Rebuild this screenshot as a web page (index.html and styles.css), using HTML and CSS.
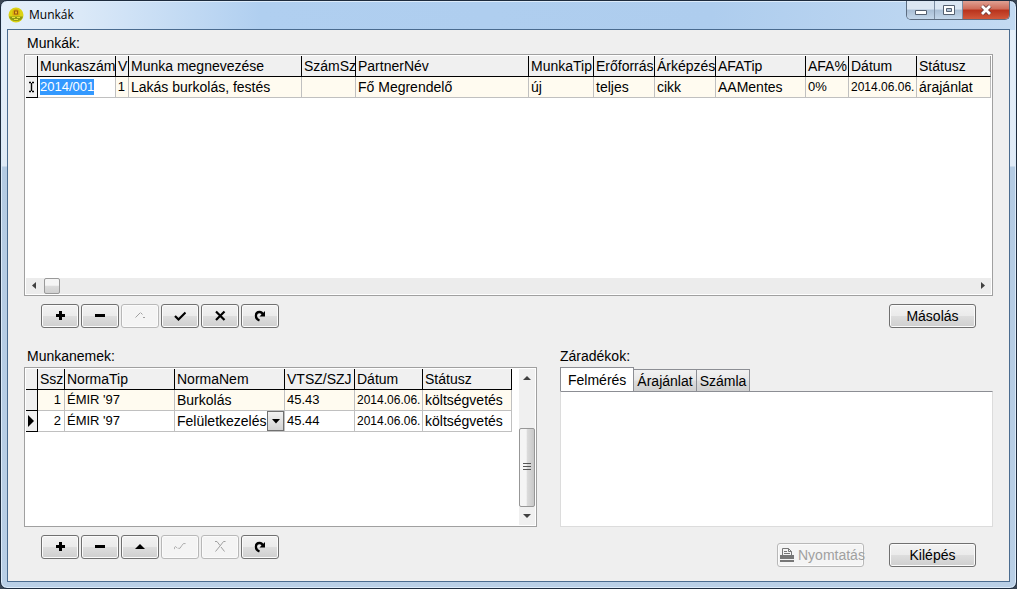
FILE: index.html
```html
<!DOCTYPE html>
<html lang="hu">
<head>
<meta charset="utf-8">
<title>Munkák</title>
<link rel="stylesheet" href="styles.css">
</head>
<body>
<svg class="defs" aria-hidden="true">
  <symbol id="plus" viewBox="0 0 12 12"><path d="M5 1h3v3h3v3h-3v3h-3v-3h-3v-3h3z"/></symbol>
  <symbol id="minus" viewBox="0 0 12 12"><path d="M1 4h10v3h-10z"/></symbol>
  <symbol id="up" viewBox="0 0 12 12"><path d="M6 3l5 5h-10z"/></symbol>
  <symbol id="check" viewBox="0 0 12 12"><path d="M1 6l3.500 3.500 7-7" fill="none" stroke="currentColor" stroke-width="2.200"/></symbol>
  <symbol id="cross" viewBox="0 0 12 12"><path d="M2 1.500l8.500 8.500M10.500 1.500l-8.500 8.500" fill="none" stroke="currentColor" stroke-width="2.200"/></symbol>
  <symbol id="refresh" viewBox="0 0 12 12"><path d="M5.500 10.500C.500 8.500 1 2 5.500 2C7.500 2 8.500 3 9 5" fill="none" stroke="currentColor" stroke-width="2.300"/><path d="M11 1v5.500h-5.500z"/></symbol>
  <symbol id="up-off" viewBox="0 0 12 12"><path d="M1.500 7.500l5-5M7 3l1.500 1.500M9 7.500h2" fill="none" stroke="currentColor"/></symbol>
  <symbol id="check-off" viewBox="0 0 14 12"><path d="M.500 8.500v-2l1.500-1 2 2M5 7.500h2l2-3 2-2.500h2.500" fill="none" stroke="currentColor"/></symbol>
  <symbol id="cross-off" viewBox="0 0 12 12"><path d="M1 .500h2l3 4M11.500 .500h-2l-3.500 4.500-4.500 5.500M7 6l3.500 4.500" fill="none" stroke="currentColor"/></symbol>
</svg>
<div class="window">
  <header class="titlebar">
    <svg class="app-icon" viewBox="0 0 16 16" aria-hidden="true">
      <circle cx="8" cy="8" r="7.500" fill="#dcd313"/>
      <path d="M1 9.500h14a7.200 6 0 0 1-14 0z" fill="#8d9a16"/>
      <path d="M4.500 8.500V4q3.500-4 7 0v4.500z" fill="#d9a80c"/>
      <path d="M6 3.500h4v4h-4z" fill="#9a5a12"/>
      <path d="M7 4.500h2v2h-2z" fill="#f0c020"/>
      <path d="M4 10.500h3M9 10.500h3M6 12.500h4" stroke="#e8e040" fill="none"/>
    </svg>
    <h1 class="title">Munkák</h1>
    <div class="controls">
      <button class="control" aria-label="Kis méret"><svg width="14" height="14" viewBox="0 0 14 14"><path d="M1.500 7.500h11v4h-11z" fill="#fff" stroke="#556070"/></svg></button>
      <button class="control" aria-label="Teljes méret"><svg width="14" height="14" viewBox="0 0 14 14"><path d="M1.500 2.500h11v9h-11z" fill="#fff" stroke="#556070"/><path d="M4.500 5.500h5v3h-5z" fill="#b3c4d8" stroke="#556070"/></svg></button>
      <button class="control close" aria-label="Bezárás"><svg width="14" height="14" viewBox="0 0 14 14"><path d="M3 3l8 8M11 3l-8 8" stroke="#6b3a3a" stroke-width="4.500"/><path d="M3 3l8 8M11 3l-8 8" stroke="#fff" stroke-width="2.800"/></svg></button>
    </div>
  </header>

  <main class="client">
    <h2 class="label">Munkák:</h2>
    <section class="grid jobs">
      <div class="grid-view">
        <table class="data">
          <colgroup><col class="w-mark"><col class="w-number"><col class="w-v"><col class="w-name"><col class="w-invoice"><col class="w-name"><col class="w-type"><col class="w-medium"><col class="w-medium"><col class="w-vat"><col class="w-percent"><col class="w-date"><col></colgroup>
          <thead><tr><th></th><th>Munkaszám</th><th>V</th><th>Munka megnevezése</th><th>SzámSz</th><th>PartnerNév</th><th>MunkaTip</th><th>Erőforrás</th><th>Árképzés</th><th>AFATip</th><th>AFA%</th><th>Dátum</th><th>Státusz</th></tr></thead>
          <tbody><tr class="tint">
            <td class="mark"><svg width="11" height="12" viewBox="0 0 11 12"><path d="M3 1.500h2M6 1.500h2M3 10.500h2M6 10.500h2M5.500 2v8" fill="none" stroke="#000" stroke-width="1.400"/></svg></td>
            <td class="editing"><input class="cell-input" aria-label="Munkaszám" value="2014/001"></td>
            <td class="right code">1</td><td>Lakás burkolás, festés</td><td></td><td>Fő Megrendelő</td><td>új</td><td>teljes</td><td>cikk</td><td>AAMentes</td><td class="code">0%</td><td class="date">2014.06.06.</td><td>árajánlat</td>
          </tr></tbody>
        </table>
      </div>
      <div class="hscroll">
        <svg class="arrow" width="16" height="16" viewBox="0 0 16 16"><path d="M10 4v7l-4-3.500z"/></svg>
        <div class="hthumb"></div>
        <svg class="arrow end" width="16" height="16" viewBox="0 0 16 16"><path d="M6 4v7l4-3.500z"/></svg>
      </div>
    </section>

    <div class="actions">
      <div class="navigator">
        <button class="btn nav" aria-label="Új"><svg class="glyph"><use href="#plus"/></svg></button>
        <button class="btn nav" aria-label="Törlés"><svg class="glyph"><use href="#minus"/></svg></button>
        <button class="btn nav" aria-label="Módosítás" disabled><svg class="glyph"><use href="#up-off"/></svg></button>
        <button class="btn nav" aria-label="Mentés"><svg class="glyph"><use href="#check"/></svg></button>
        <button class="btn nav" aria-label="Elvetés"><svg class="glyph"><use href="#cross"/></svg></button>
        <button class="btn nav" aria-label="Frissítés"><svg class="glyph"><use href="#refresh"/></svg></button>
      </div>
      <button class="btn wide">Másolás</button>
    </div>

    <div class="lower">
      <section class="pane">
        <h2 class="label">Munkanemek:</h2>
        <div class="grid trades">
          <div class="grid-view">
            <table class="data closed">
              <colgroup><col class="w-mark"><col class="w-order"><col class="w-norm"><col class="w-norm"><col class="w-code"><col class="w-date"><col></colgroup>
              <thead><tr><th></th><th>Ssz</th><th>NormaTip</th><th>NormaNem</th><th>VTSZ/SZJ</th><th>Dátum</th><th>Státusz</th></tr></thead>
              <tbody>
                <tr class="tint"><td class="mark"></td><td class="right code">1</td><td class="code">ÉMIR '97</td><td>Burkolás</td><td class="code">45.43</td><td class="date">2014.06.06.</td><td>költségvetés</td></tr>
                <tr><td class="mark"><svg width="10" height="12" viewBox="0 0 10 12"><path d="M2 0v12l6-6z"/></svg></td><td class="right code">2</td><td class="code">ÉMIR '97</td>
                  <td><div class="combo"><select class="combo-select" aria-label="NormaNem"><option>Felületkezelés</option></select><span class="combo-arrow"><svg width="8" height="5" viewBox="0 0 8 5"><path d="M0 0h8l-4 4.500z"/></svg></span></div></td>
                  <td class="code">45.44</td><td class="date">2014.06.06.</td><td>költségvetés</td></tr>
              </tbody>
            </table>
          </div>
          <div class="vscroll">
            <svg class="arrow" width="16" height="20" viewBox="0 0 16 20"><path d="M4 11h8l-4-4z"/></svg>
            <div class="vspace"></div>
            <div class="vthumb"><svg width="8" height="8" viewBox="0 0 8 8"><path d="M0 .500h8M0 3.500h8M0 6.500h8" stroke="#555"/></svg></div>
            <svg class="arrow" width="16" height="18" viewBox="0 0 16 18"><path d="M4 7h8l-4 4z"/></svg>
          </div>
        </div>
      </section>
      <section class="pane">
        <h2 class="label">Záradékok:</h2>
        <div class="tabs" role="tablist">
          <button class="tab active" role="tab" aria-selected="true">Felmérés</button>
          <button class="tab" role="tab" aria-selected="false">Árajánlat</button>
          <button class="tab" role="tab" aria-selected="false">Számla</button>
        </div>
        <div class="sheet" role="tabpanel"></div>
      </section>
    </div>

    <footer class="actions bottom">
      <div class="navigator">
        <button class="btn nav" aria-label="Új"><svg class="glyph"><use href="#plus"/></svg></button>
        <button class="btn nav" aria-label="Törlés"><svg class="glyph"><use href="#minus"/></svg></button>
        <button class="btn nav" aria-label="Módosítás"><svg class="glyph"><use href="#up"/></svg></button>
        <button class="btn nav" aria-label="Mentés" disabled><svg class="glyph"><use href="#check-off"/></svg></button>
        <button class="btn nav" aria-label="Elvetés" disabled><svg class="glyph"><use href="#cross-off"/></svg></button>
        <button class="btn nav" aria-label="Frissítés"><svg class="glyph"><use href="#refresh"/></svg></button>
      </div>
      <div class="dialog-buttons">
        <button class="btn wide print" disabled><svg class="printer" width="16" height="16" viewBox="0 0 16 16"><path d="M3.500 8.500v-7h6l3 3v4M9.500 1.500v3h3M5 4.500h3M5 6.500h6" fill="none" stroke="#777"/><path d="M1 8h14v4h-14zM1 13h14v2h-14z" fill="#777"/></svg>Nyomtatás</button>
        <button class="btn wide">Kilépés</button>
      </div>
    </footer>
  </main>
</div>
</body>
</html>
```
FILE: styles.css
```css
* { box-sizing: border-box; }

body {
  margin: 0;
  background: #3a4654;
  color: #000;
  font: 14px/16px "Liberation Sans", Arial, sans-serif;
}

button, input, select { font: inherit; color: inherit; }
.defs { position: absolute; width: 0; height: 0; }

.window {
  display: flex;
  flex-direction: column;
  height: 100vh;
  min-height: 440px;
  padding: 0 6px 6px;
  border: 1px solid #1d2b3d;
  border-radius: 7px;
  box-shadow: inset 0 0 0 1px #dcebfa;
  background:
    linear-gradient(90deg, #e4effa 0, #dbe9f8 80px, #b0cff0 260px, #aecdee 70%, #c3daf2 100%) top / 100% 29px no-repeat,
    linear-gradient(#e6f0fa 0, #dfeaf6 165px, #b4cbe3 166px, #b9cfe6 100%);
}

.titlebar {
  display: flex;
  align-items: center;
  flex: none;
  height: 28px;
  padding-left: 1px;
}

.app-icon { width: 16px; height: 16px; margin-right: 5px; }
.title { flex: 1; margin: 0; font: 12px/16px "Open Sans", "Noto Sans", sans-serif; }

.controls {
  display: flex;
  align-self: flex-start;
  height: 19px;
  border: 1px solid #5c6c80;
  border-top: 0;
  border-radius: 0 0 5px 5px;
  overflow: hidden;
}

.control {
  display: grid;
  place-items: center;
  width: 28px;
  padding: 0;
  border: 0;
  border-right: 1px solid #7c8da2;
  background: linear-gradient(#dbe6f2 0 45%, #a9bed5 50%, #c3d6ea);
}

.control.close {
  width: 46px;
  border: 0;
  background: linear-gradient(#e0a193 0, #cf6b58 45%, #b8321c 50%, #d1583b);
}

.client {
  display: flex;
  flex-direction: column;
  flex: 1;
  min-height: 0;
  padding: 5px 16px 0;
  border: 1px solid #4a6b8f;
  background: #efefef;
}

.label { margin: 0 0 3px 3px; font: inherit; }

.grid {
  display: flex;
  min-height: 0;
  padding: 1px;
  border: 1px solid #a0a0a0;
  background: #fff;
}

.jobs { flex: 3 1 0; flex-direction: column; }
.trades { flex: 1; }
.grid-view { flex: 1; min-width: 0; min-height: 0; overflow: hidden; }

.data {
  width: 100%;
  table-layout: fixed;
  border-collapse: separate;
  border-spacing: 0;
}

.trades .grid-view { padding-right: 7px; }

.w-mark { width: 12px; }
.w-number { width: 78px; }
.w-v { width: 13px; }
.w-name { width: 173px; }
.w-invoice { width: 54px; }
.w-type { width: 65px; }
.w-medium { width: 61px; }
.w-vat { width: 90px; }
.w-percent { width: 43px; }
.w-date { width: 68px; }
.w-order { width: 27px; }
.w-norm { width: 110px; }
.w-code { width: 70px; }

.data th, .data td {
  height: 21px;
  padding: 0 0 0 2px;
  overflow: hidden;
  white-space: nowrap;
  text-align: left;
  font-weight: normal;
}

.data th, .data .mark {
  border-right: 1px solid #000;
  border-bottom: 1px solid #000;
  background: #f0f0f0;
}

.data th:last-child { border-right-color: #a0a0a0; }
.closed th:last-child { border-right-color: #000; }

.data td {
  border-right: 1px solid #c0c0c0;
  border-bottom: 1px solid #c0c0c0;
}

.data .mark { padding: 0; border-color: #000; }
.mark svg { display: block; }
.tint td { background: #fffbf0; }
.data .right { padding: 0 3px 0 0; text-align: right; }
.data .code { font-size: 13px; }
.data .date { font-size: 12px; }
.tint .editing { background: #fff; }

.cell-input {
  display: block;
  field-sizing: content;
  height: 16px;
  padding: 0;
  border: 0;
  outline: 0;
  background: #3399ff;
  color: #fff;
  font-size: 13px;
}

.combo { position: relative; height: 20px; }

.combo-select {
  display: block;
  width: 100%;
  height: 20px;
  padding: 0 17px 0 0;
  border: 0;
  appearance: none;
  background: transparent;
}

.combo-arrow {
  position: absolute;
  top: 0;
  right: 0;
  display: grid;
  place-items: center;
  width: 17px;
  height: 20px;
  border: 1px solid #707070;
  background: linear-gradient(#f2f2f2, #d2d2d2);
  pointer-events: none;
}

.hscroll { display: flex; flex: none; height: 16px; background: #ececec; }
.arrow { flex: none; fill: #404040; }
.end { margin-left: auto; }

.hthumb {
  width: 16px;
  margin: 0 2px;
  border: 1px solid #999;
  border-radius: 2px;
  background: linear-gradient(#f5f5f5 0 45%, #dcdcdc 50%, #d0d0d0);
}

.vscroll {
  display: flex;
  flex-direction: column;
  flex: none;
  width: 16px;
  background: #f0f0f0;
}

.vspace { flex: 40; }

.vthumb {
  display: grid;
  flex: 80;
  place-items: center;
  border: 1px solid #979797;
  border-radius: 2px;
  background: linear-gradient(90deg, #f5f5f5 0 45%, #dcdcdc 50%, #c8c8c8);
}

.actions {
  display: flex;
  flex: none;
  justify-content: space-between;
  align-items: flex-start;
  padding: 8px 17px 20px;
}

.navigator { display: flex; gap: 2px; }

.btn {
  display: flex;
  align-items: center;
  justify-content: center;
  height: 24px;
  padding: 0;
  border: 1px solid #707070;
  border-radius: 3px;
  box-shadow: inset 0 0 0 1px #fbfbfb;
  background: linear-gradient(#f2f2f2 0, #ebebeb 48%, #dddddd 52%, #cfcfcf);
}

.btn:disabled {
  border-color: #b8b8b8;
  background: #f4f4f4;
  color: #a0a0a0;
}

.nav { width: 38px; }
.wide { width: 87px; }
.glyph { width: 12px; height: 12px; fill: currentColor; }

.lower {
  display: grid;
  flex: 2 1 20px;
  grid-template-columns: 513fr 433fr;
  gap: 23px;
  min-height: 0;
}

.pane { display: flex; flex-direction: column; min-width: 0; min-height: 0; }
.pane:last-child .label { margin-left: 0; }

.tabs { display: flex; flex: none; align-items: flex-end; height: 24px; }

.tab {
  height: 22px;
  padding: 0 3px;
  border: 1px solid #8c8e94;
  border-left: 0;
  border-bottom: 0;
  background: linear-gradient(#f2f2f2 0, #e8e8e8 48%, #dcdcdc 52%, #d0d0d0);
}

.tab.active {
  height: 24px;
  padding: 0 7px;
  border-left: 1px solid #8c8e94;
  background: #fff;
}

.sheet {
  flex: 1;
  border: 1px solid #dcdcdc;
  border-top-color: #8c8e94;
  background: #fff;
}

.bottom { height: 54px; padding-bottom: 0; }
.dialog-buttons { display: flex; gap: 25px; padding-top: 8px; }
.print { gap: 3px; justify-content: flex-start; }
.printer { flex: none; margin-left: 1px; }
```
